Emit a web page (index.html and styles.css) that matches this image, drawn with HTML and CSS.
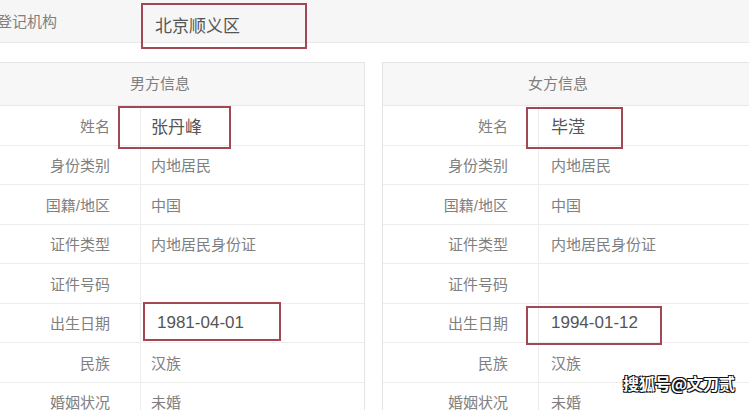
FILE: index.html
```html
<!DOCTYPE html>
<html lang="zh-CN">
<head>
    <meta charset="UTF-8">
    <meta name="viewport" content="width=device-width, initial-scale=1.0">
    <title>结婚登记信息</title>
    <link rel="stylesheet" href="styles.css">
</head>
<body>
    <!-- 登记机构 -->
    <div class="org-bar">
        <span class="org-label">登记机构</span>
        <span class="org-value">北京顺义区</span>
    </div>

    <!-- 双方信息 -->
    <div class="panels">
        <section class="panel panel-male">
            <div class="panel-head">男方信息</div>
            <div class="row"><div class="label">姓名</div><div class="value"><span class="big mark mark-name-m">张丹峰</span></div></div>
            <div class="row"><div class="label">身份类别</div><div class="value">内地居民</div></div>
            <div class="row"><div class="label">国籍/地区</div><div class="value">中国</div></div>
            <div class="row"><div class="label">证件类型</div><div class="value">内地居民身份证</div></div>
            <div class="row"><div class="label">证件号码</div><div class="value"></div></div>
            <div class="row"><div class="label">出生日期</div><div class="value"><span class="big date mark mark-date-m">1981-04-01</span></div></div>
            <div class="row"><div class="label">民族</div><div class="value">汉族</div></div>
            <div class="row"><div class="label">婚姻状况</div><div class="value">未婚</div></div>
        </section>

        <section class="panel panel-female">
            <div class="panel-head">女方信息</div>
            <div class="row"><div class="label">姓名</div><div class="value"><span class="big mark mark-name-f">毕滢</span></div></div>
            <div class="row"><div class="label">身份类别</div><div class="value">内地居民</div></div>
            <div class="row"><div class="label">国籍/地区</div><div class="value">中国</div></div>
            <div class="row"><div class="label">证件类型</div><div class="value">内地居民身份证</div></div>
            <div class="row"><div class="label">证件号码</div><div class="value"></div></div>
            <div class="row"><div class="label">出生日期</div><div class="value"><span class="big mark mark-date-f">1994-01-12</span></div></div>
            <div class="row"><div class="label">民族</div><div class="value">汉族</div></div>
            <div class="row"><div class="label">婚姻状况</div><div class="value">未婚</div></div>
        </section>
    </div>

    <!-- 水印 -->
    <div class="watermark">搜狐号@文刀贰</div>
</body>
</html>
```

FILE: styles.css
```css
/* 基础 */
body {
    margin: 0;
    width: 749px;
    height: 410px;
    overflow: hidden;
    position: relative;
    background: #fff;
    font-family: "Liberation Sans", "Noto Sans CJK SC", sans-serif;
    font-size: 15px;
    color: #808080;
}

/* 登记机构 */
.org-bar {
    display: flex;
    align-items: flex-start;
    height: 42px;
    background: #f6f6f6;
    border-bottom: 1px solid #e8e8e8;
}

.org-label {
    flex: 0 0 158px;
    margin-left: -3px;
    padding-top: 13px;
    line-height: 18px;
}

.org-value {
    position: relative;
    padding-top: 17px;
    line-height: 20px;
    font-size: 17px;
    color: #555;
}

.org-value::after {
    content: "";
    position: absolute;
    left: -14px;
    top: 3px;
    width: 162px;
    height: 42px;
    border: 2px solid #a24852;
}

/* 面板 */
.panels {
    display: grid;
    grid-template-columns: 410px 410px;
    gap: 17px;
    margin: 19px 0 0 -45px;
}

.panel {
    border: 1px solid #e4e4e4;
    border-bottom: none;
}

.panel-male { --label-w: 185px; }
.panel-female { --label-w: 156px; }

.panel-head {
    height: 42px;
    line-height: 42px;
    text-align: center;
    background: #f7f7f7;
    border-bottom: 1px solid #e8e8e8;
}

.panel-female .panel-head {
    padding-right: 58px;
}

.row {
    display: grid;
    grid-template-columns: var(--label-w) 1fr;
    height: 38.5px;
    border-bottom: 1px solid #ededed;
}

.label {
    display: flex;
    align-items: center;
    justify-content: flex-end;
    padding-right: 30px;
    border-right: 1px solid #ededed;
}

.value {
    position: relative;
    display: flex;
    align-items: center;
    padding-left: 10px;
}

.panel-female .value {
    padding-left: 12px;
}

/* 标注的重点值 */
.big {
    font-size: 17px;
    color: #555;
}

.date {
    padding-left: 6px;
}

.mark::after {
    content: "";
    position: absolute;
    border: 2px solid #a24852;
}

.mark-name-m::after { left: -23px; top: 0; width: 109px; height: 39px; }
.mark-name-f::after { left: -13px; top: 1px; width: 93px; height: 38px; }
.mark-date-m::after { left: 2px; top: -1.5px; width: 134px; height: 35px; }
.mark-date-f::after { left: -13px; top: 2.5px; width: 132px; height: 35px; }

/* 水印 */
.watermark {
    position: absolute;
    right: 14px;
    top: 372px;
    font-family: "Noto Sans CJK SC", sans-serif;
    font-size: 16px;
    font-weight: bold;
    line-height: 22px;
    color: #fff;
    text-shadow: -1px -1px 0 #111, 1px -1px 0 #111, -1px 1px 0 #111, 1px 1px 0 #111;
}
```
